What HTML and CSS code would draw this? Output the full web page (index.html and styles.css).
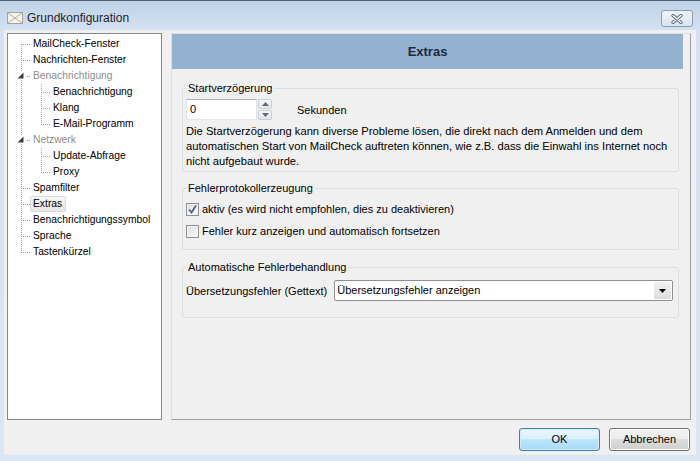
FILE: index.html
```html
<!DOCTYPE html>
<html lang="de">
<head>
<meta charset="utf-8">
<title>Grundkonfiguration</title>
<link rel="stylesheet" href="styles.css">
</head>
<body>
<div class="window">
  <div class="titlebar">
    <svg class="app-icon" width="16" height="16" viewBox="0 0 16 16">
      <rect x="0.5" y="2.5" width="15" height="11" fill="#f6f2e8" stroke="#a3a3a3"/>
      <path d="M1 3 L15 13 M15 3 L1 13" stroke="#b5b0a5" stroke-width="1" fill="none"/>
    </svg>
    <span class="title">Grundkonfiguration</span>
    <span class="close">
      <svg width="12" height="10" viewBox="0 0 12 10">
        <path d="M2 1.5 L10 8.5 M10 1.5 L2 8.5" stroke="#55657a" stroke-width="3.2" stroke-linecap="round" fill="none"/>
        <path d="M2 1.5 L10 8.5 M10 1.5 L2 8.5" stroke="#ffffff" stroke-width="1.4" stroke-linecap="round" fill="none"/>
      </svg>
    </span>
  </div>
  <div class="client">
    <div class="main">
      <div class="tree">
        <div class="row"><span class="cell c-first"></span><span class="label">MailCheck-Fenster</span></div>
        <div class="row"><span class="cell c-tee"></span><span class="label">Nachrichten-Fenster</span></div>
        <div class="row"><span class="cell c-parent"><svg width="20" height="16" viewBox="0 0 20 16"><rect x="6" y="3" width="8" height="9" fill="#fff"/><polygon points="12.5,4.5 12.5,10.5 6.5,10.5" fill="#3d3d3d"/><rect x="16" y="8" width="1" height="1" fill="#a0a0a0"/><rect x="18" y="8" width="1" height="1" fill="#a0a0a0"/></svg></span><span class="label muted">Benachrichtigung</span></div>
        <div class="row"><span class="cell c-pipe"></span><span class="cell c-tee"></span><span class="label">Benachrichtigung</span></div>
        <div class="row"><span class="cell c-pipe"></span><span class="cell c-tee"></span><span class="label">Klang</span></div>
        <div class="row"><span class="cell c-pipe"></span><span class="cell c-elbow"></span><span class="label">E-Mail-Programm</span></div>
        <div class="row"><span class="cell c-parent"><svg width="20" height="16" viewBox="0 0 20 16"><rect x="6" y="3" width="8" height="9" fill="#fff"/><polygon points="12.5,4.5 12.5,10.5 6.5,10.5" fill="#3d3d3d"/><rect x="16" y="8" width="1" height="1" fill="#a0a0a0"/><rect x="18" y="8" width="1" height="1" fill="#a0a0a0"/></svg></span><span class="label muted">Netzwerk</span></div>
        <div class="row"><span class="cell c-pipe"></span><span class="cell c-tee"></span><span class="label">Update-Abfrage</span></div>
        <div class="row"><span class="cell c-pipe"></span><span class="cell c-elbow"></span><span class="label">Proxy</span></div>
        <div class="row"><span class="cell c-tee"></span><span class="label">Spamfilter</span></div>
        <div class="row"><span class="cell c-tee"></span><span class="label selected">Extras</span></div>
        <div class="row"><span class="cell c-tee"></span><span class="label">Benachrichtigungssymbol</span></div>
        <div class="row"><span class="cell c-tee"></span><span class="label">Sprache</span></div>
        <div class="row"><span class="cell c-elbow"></span><span class="label">Tastenkürzel</span></div>
      </div>
      <div class="page">
        <div class="page-header">Extras</div>
        <fieldset class="group g-start">
          <legend>Startverzögerung</legend>
          <div class="spin-row">
            <div class="spin">
              <span class="spin-input">0</span>
              <span class="spin-btns">
                <span class="spin-btn"><svg width="7" height="4" viewBox="0 0 7 4"><polygon points="3.5,0 7,4 0,4" fill="#5a6a7e"/></svg></span>
                <span class="spin-btn"><svg width="7" height="4" viewBox="0 0 7 4"><polygon points="0,0 7,0 3.5,4" fill="#5a6a7e"/></svg></span>
              </span>
            </div>
            <span class="unit">Sekunden</span>
          </div>
          <p class="desc">Die Startverzögerung kann diverse Probleme lösen, die direkt nach dem Anmelden und dem<br>automatischen Start von MailCheck auftreten können, wie z.B. dass die Einwahl ins Internet noch<br>nicht aufgebaut wurde.</p>
        </fieldset>
        <fieldset class="group g-log">
          <legend>Fehlerprotokollerzeugung</legend>
          <div class="check-row">
            <span class="checkbox checked"><svg width="11" height="11" viewBox="0 0 11 11"><path d="M2 5.5 L4.5 8.5 L9 1.5" stroke="#4a5f97" stroke-width="1.8" fill="none"/></svg></span>
            <span>aktiv (es wird nicht empfohlen, dies zu deaktivieren)</span>
          </div>
          <div class="check-row">
            <span class="checkbox"></span>
            <span>Fehler kurz anzeigen und automatisch fortsetzen</span>
          </div>
        </fieldset>
        <fieldset class="group g-auto">
          <legend>Automatische Fehlerbehandlung</legend>
          <div class="combo-row">
            <span class="combo-label">Übersetzungsfehler (Gettext)</span>
            <div class="combo">
              <span class="combo-text">Übersetzungsfehler anzeigen</span>
              <span class="combo-arrow"><svg width="7" height="4" viewBox="0 0 7 4"><polygon points="0,0 7,0 3.5,4" fill="#000"/></svg></span>
            </div>
          </div>
        </fieldset>
      </div>
    </div>
    <div class="footer">
      <span class="btn default">OK</span>
      <span class="btn">Abbrechen</span>
    </div>
  </div>
</div>
</body>
</html>
```
FILE: styles.css
```css
* { box-sizing: border-box; }
html, body { margin: 0; padding: 0; }
body {
  width: 700px;
  height: 461px;
  overflow: hidden;
  font-family: "Liberation Sans", Arial, sans-serif;
  font-size: 11px;
  color: #000;
}
.window {
  width: 700px;
  height: 461px;
  border-top: 1px solid #4f5f72;
  background: linear-gradient(#bfd2e7, #d3e1f0 28px, #d9e6f3);
  display: flex;
  flex-direction: column;
}
.titlebar {
  height: 29px;
  flex: none;
  display: flex;
  align-items: flex-start;
  padding: 9px 7px 0 7px;
}
.app-icon { flex: none; }
.title {
  margin-left: 4px;
  font-size: 12px;
  line-height: 16px;
  color: #1e2228;
  flex: 1;
}
.close {
  width: 32px;
  height: 17px;
  border: 1px solid #8c9db3;
  border-radius: 3px;
  background: linear-gradient(#eef3f9, #d9e4f0);
  display: flex;
  align-items: center;
  justify-content: center;
}
.client {
  flex: 1;
  margin: 0 4px 6px;
  background: #f0f0f0;
  padding: 3px 5px 4px 3px;
  display: flex;
  flex-direction: column;
}
.main {
  height: 387px;
  display: flex;
  gap: 9px;
}
.tree {
  width: 155px;
  flex: none;
  background: #fff;
  border: 1px solid #828790;
  padding: 2px 0 0 3px;
  font-size: 10.3px;
}
.row {
  height: 16px;
  display: flex;
  align-items: center;
  white-space: nowrap;
}
.cell {
  width: 20px;
  height: 16px;
  flex: none;
  position: relative;
}
.cell::before {
  content: "";
  position: absolute;
  left: 10px;
  width: 1px;
  top: 0;
  bottom: 0;
  background: repeating-linear-gradient(to bottom, #a0a0a0 0 1px, transparent 1px 2px);
}
.cell::after {
  content: "";
  position: absolute;
  left: 11px;
  right: 0;
  top: 8px;
  height: 1px;
  background: repeating-linear-gradient(to right, transparent 0 1px, #a0a0a0 1px 2px);
}
.c-first::before { top: 8px; }
.c-elbow::before { bottom: 7px; }
.c-pipe::after { display: none; }
.c-parent::after { display: none; }
.c-parent svg { position: relative; display: block; }
.label {
  border: 1px solid transparent;
  padding: 0 2px 0 1px;
  line-height: 14px;
}
.label.muted { color: #8e8e8e; }
.label.selected {
  margin-left: -1px;
  padding: 0 3px 0 2px;
  border-color: #d9d9d9;
  border-radius: 2px;
  background: linear-gradient(#f8f8f8, #e5e5e5);
}
.page {
  flex: 1;
  border: 1px solid;
  border-color: #dedede #a0a0a0 #a0a0a0 #dedede;
  display: flex;
  flex-direction: column;
}
.page-header {
  height: 35px;
  margin-right: 7px;
  background: #95b1d0;
  text-align: center;
  font-weight: bold;
  font-size: 13px;
  line-height: 35px;
  color: #1b2a3b;
}
.group {
  margin: 0 11px 0 10px;
  border: 1px solid #d5dfe5;
  border-radius: 3px;
  min-width: 0;
}
.group legend {
  padding: 0 2px;
  line-height: 13px;
}
.g-start { margin-top: 13px; padding: 4px 3px 2px 3px; }
.g-log { margin-top: 10px; padding: 3px 3px 7px 3px; }
.g-auto { margin-top: 11px; padding: 6px 3px 16px 3px; }
.spin-row {
  display: flex;
  align-items: center;
  height: 21px;
}
.spin {
  display: flex;
  height: 21px;
}
.spin-input {
  width: 71px;
  background: #fff;
  border: 1px solid #abadb3;
  border-color: #abadb3 #dbdfe6 #e3e9ef #e2e3ea;
  padding-left: 3px;
  line-height: 19px;
}
.spin-btns {
  width: 15px;
  display: flex;
  flex-direction: column;
  gap: 1px;
  padding: 0 0 0 1px;
}
.spin-btn {
  flex: 1;
  border: 1px solid #c9ced6;
  border-radius: 2px;
  background: linear-gradient(#f6f6f6, #e4e6ea);
  display: flex;
  align-items: center;
  justify-content: center;
}
.spin-btn svg { display: block; }
.unit { margin-left: 25px; }
.desc {
  margin: 4px 0 0;
  line-height: 15px;
  font-size: 11.2px;
  white-space: nowrap;
}
.check-row {
  height: 22px;
  display: flex;
  align-items: center;
  white-space: nowrap;
}
.checkbox {
  width: 13px;
  height: 13px;
  flex: none;
  margin-right: 3px;
  border: 1px solid #8f8f8f;
  background: linear-gradient(135deg, #dcdcdc, #fdfdfd);
  box-shadow: inset 0 0 0 1px #f4f4f4;
  display: flex;
  align-items: center;
  justify-content: center;
}
.checkbox svg { display: block; }
.combo-row {
  display: flex;
  align-items: center;
  white-space: nowrap;
}
.combo {
  flex: 1;
  margin-left: 7px;
  margin-right: 2px;
  height: 21px;
  border: 1px solid #8e8f8f;
  border-radius: 2px;
  background: #fff;
  display: flex;
  align-items: stretch;
}
.combo-text {
  flex: 1;
  padding-left: 2px;
  line-height: 19px;
}
.combo-arrow {
  width: 17px;
  margin: 1px;
  background: linear-gradient(#f2f2f2, #dcdcdc);
  display: flex;
  align-items: center;
  justify-content: center;
}
.footer {
  margin-top: 8px;
  height: 23px;
  display: flex;
  justify-content: flex-end;
  gap: 9px;
  padding-right: 1px;
}
.btn {
  width: 81px;
  height: 23px;
  border: 1px solid #707070;
  border-radius: 3px;
  background: linear-gradient(#f2f2f2 0, #ebebeb 50%, #dddddd 50%, #cfcfcf 100%);
  box-shadow: inset 0 0 0 1px #fcfcfc;
  text-align: center;
  line-height: 21px;
}
.btn.default {
  border-color: #3c7fb1;
  background: linear-gradient(#eaf6fd 0, #d9f0fc 50%, #bee6fd 50%, #a7d9f5 100%);
  box-shadow: inset 0 0 0 1px #d2ecfa;
}
```
